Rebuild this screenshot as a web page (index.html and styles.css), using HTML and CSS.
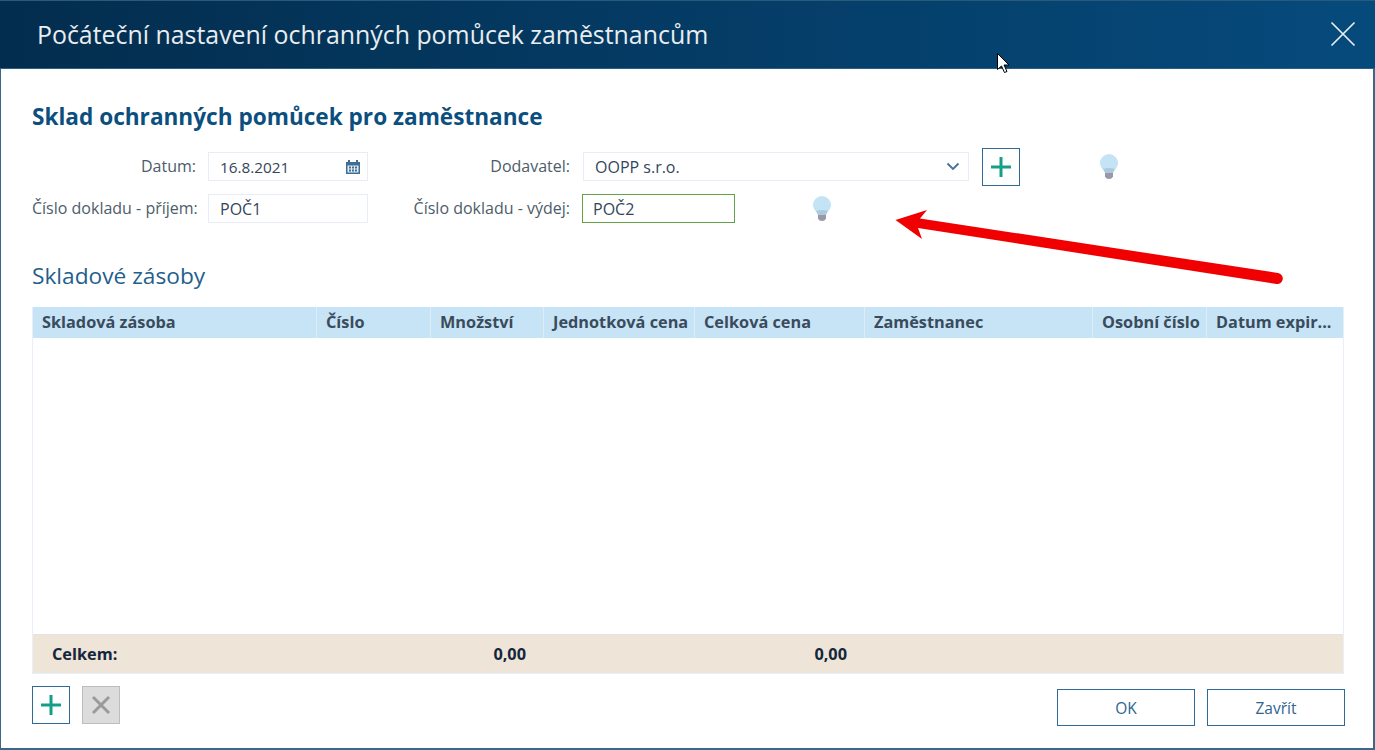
FILE: index.html
```html
<!DOCTYPE html>
<html lang="cs">
<head>
<meta charset="utf-8">
<title>Počáteční nastavení ochranných pomůcek zaměstnancům</title>
<link rel="stylesheet" href="styles.css">
</head>
<body>
<div class="window">
  <header class="titlebar">
    <h1 class="title">Počáteční nastavení ochranných pomůcek zaměstnancům</h1>
    <svg class="close" width="26" height="26" viewBox="0 0 26 26"><path d="M1.500 1.500 24.500 24.500M24.500 1.500 1.500 24.500" stroke="#e8eef3" stroke-width="1.700" fill="none"/></svg>
  </header>
  <main class="content">
    <h2 class="heading">Sklad ochranných pomůcek pro zaměstnance</h2>
    <div class="form">
      <div class="form-row">
        <label class="label label-a">Datum:</label>
        <div class="field field-a field-date"><span>16.8.2021</span>
          <svg width="16" height="16" viewBox="0 0 16 16"><path d="M1 3h14v12H1z" fill="#3f6d94"/><path d="M4 1v3M12 1v3" stroke="#3f6d94" stroke-width="2"/><path d="M2.500 6.500h11v7h-11z" fill="#e4edf4"/><path d="M4 7.500h2v2H4zM7 7.500h2v2H7zM10 7.500h2v2h-2zM4 10.500h2v2H4zM7 10.500h2v2H7zM10 10.500h2v2h-2z" fill="#3f6d94"/></svg>
        </div>
        <label class="label label-b">Dodavatel:</label>
        <div class="field field-select"><span>OOPP s.r.o.</span>
          <svg width="14" height="9" viewBox="0 0 14 9"><path d="M1.500 1.500 7 7l5.500-5.500" stroke="#45709b" stroke-width="1.800" fill="none"/></svg>
        </div>
        <button class="icon-btn add-top" type="button"><svg width="22" height="22" viewBox="0 0 22 22"><path d="M11 1v20M1 11h20" stroke="#14a088" stroke-width="3"/></svg></button>
        <svg class="bulb bulb-a" width="20" height="26" viewBox="0 0 20 26"><circle cx="10" cy="9" r="9" fill="#c4e3f4"/><path d="M5 14h10l-1.500 5h-7z" fill="#c4e3f4"/><path d="M4 15q6 -2 12 0l-2 4H6z" fill="#a9cbdd"/><path d="M6 19h8v3.500q-1 2.500-4 2.500t-4-2.500z" fill="#9a98a6"/></svg>
      </div>
      <div class="form-row row-two">
        <label class="label label-a">Číslo dokladu - příjem:</label>
        <div class="field field-a"><span>POČ1</span></div>
        <label class="label label-c">Číslo dokladu - výdej:</label>
        <div class="field field-active"><span>POČ2</span></div>
        <svg class="bulb bulb-b" width="20" height="26" viewBox="0 0 20 26"><circle cx="10" cy="9" r="9" fill="#c4e3f4"/><path d="M5 14h10l-1.500 5h-7z" fill="#c4e3f4"/><path d="M4 15q6 -2 12 0l-2 4H6z" fill="#a9cbdd"/><path d="M6 19h8v3.500q-1 2.500-4 2.500t-4-2.500z" fill="#9a98a6"/></svg>
      </div>
    </div>
    <h3 class="subheading">Skladové zásoby</h3>
    <section class="table">
      <div class="grid thead">
        <div class="th">Skladová zásoba</div>
        <div class="th">Číslo</div>
        <div class="th">Množství</div>
        <div class="th">Jednotková cena</div>
        <div class="th">Celková cena</div>
        <div class="th">Zaměstnanec</div>
        <div class="th">Osobní číslo</div>
        <div class="th">Datum expir...</div>
      </div>
      <div class="tbody"></div>
      <div class="grid tfoot">
        <div class="tf tf-label">Celkem:</div>
        <div class="tf"></div>
        <div class="tf tf-num">0,00</div>
        <div class="tf"></div>
        <div class="tf tf-num">0,00</div>
        <div class="tf"></div>
        <div class="tf"></div>
        <div class="tf"></div>
      </div>
    </section>
    <footer class="actions">
      <div class="actions-left">
        <button class="icon-btn" type="button"><svg width="22" height="22" viewBox="0 0 22 22"><path d="M11 1v20M1 11h20" stroke="#14a088" stroke-width="3"/></svg></button>
        <button class="icon-btn disabled" type="button"><svg width="20" height="20" viewBox="0 0 20 20"><path d="M2 2l16 16M18 2 2 18" stroke="#9a9a9a" stroke-width="3"/></svg></button>
      </div>
      <div class="actions-right">
        <button class="btn" type="button">OK</button>
        <button class="btn" type="button">Zavřít</button>
      </div>
    </footer>
  </main>
  <svg class="annotation" width="1375" height="750" viewBox="0 0 1375 750">
    <path d="M895.500 220 927 210 920 218.500 1278 273a5.500 5.500 0 0 1-1.500 11L918 228 922 239z" fill="#f00000"/>
    <path d="M997.500 53.500v16l4-3.500 3 6.500 2.500-1-3-6.500h5z" fill="#fff" stroke="#000" stroke-width="1"/>
  </svg>
</div>
</body>
</html>
```
FILE: styles.css
```css
* { box-sizing: border-box; }
html, body { margin: 0; padding: 0; height: 100%; background: #fff; }
body { font-family: "Open Sans", "Noto Sans", sans-serif; overflow: hidden; }
.window {
  position: relative;
  width: 1375px;
  height: 750px;
  display: flex;
  flex-direction: column;
  border-bottom: 2px solid #3d6885;
}
.titlebar {
  height: 69px;
  flex: none;
  display: flex;
  align-items: center;
  justify-content: space-between;
  padding: 0 19px 2px 37px;
  background: linear-gradient(90deg, #032d4e 0%, #064a7c 100%);
  border-top: 1px solid #285a7c;
  border-bottom: 1px solid #2a6088;
}
.title { margin: 0; font-size: 24.9px; font-weight: 400; color: #e9edf0; white-space: nowrap; }
.close { display: block; margin-top: 1px; }
.content {
  flex: 1;
  display: flex;
  flex-direction: column;
  min-height: 0;
  padding: 0 29px 0 31px;
  border-left: 1px solid #3d6885;
  border-right: 2px solid #3d6885;
}
.heading { margin: 33px 0 0; height: 30px; font-size: 22.600px; line-height: 30px; font-weight: 700; color: #0b4f7f; white-space: nowrap; }
.form { margin-top: 20px; display: flex; flex-direction: column; gap: 13px; }
.form-row { display: flex; align-items: center; height: 29px; position: relative; }
.label { font-size: 16px; color: #4d5c6b; text-align: right; white-space: nowrap; margin-top: -1px; }
.label-a { width: 164px; }
.label-b { width: 202px; }
.label-c { width: 202px; }
.field {
  height: 29px;
  display: flex;
  align-items: center;
  justify-content: space-between;
  margin-left: 12px;
  padding: 0 6px 0 11px;
  font-size: 16px;
  color: #34465a;
  background: #fff;
  border: 1px solid #e6edf7;
}
.field-a { width: 160px; }
.field-date { font-size: 15.300px; }
.field-select { width: 386px; margin-left: 13px; padding-right: 8px; }
.field-active { width: 153px; border-color: #62a245; padding-left: 10px; }
.icon-btn {
  width: 38px;
  height: 38px;
  padding: 0;
  display: flex;
  align-items: center;
  justify-content: center;
  background: #fff;
  border: 1px solid #2e6a98;
}
.add-top { margin-left: 13px; flex: none; }
.disabled { background: #dcdcdc; border: 1px solid #bdbdbd; }
.bulb { position: absolute; top: 2px; }
.bulb-a { left: 1067px; }
.bulb-b { left: 780px; }
.subheading { margin: 38px 0 0; height: 30px; font-size: 22.700px; line-height: 30px; font-weight: 400; color: #1f5f8d; white-space: nowrap; }
.table { margin-top: 16px; display: flex; flex-direction: column; height: 367px; flex: none; border: 1px solid #e9eff8; border-top: 0; }
.grid { display: grid; grid-template-columns: 284px 114px 113px 151px 170px 228px 114px 1fr; }
.thead { height: 31px; background: #c6e4f6; }
.th { padding-left: 9px; font-size: 16.300px; line-height: 30px; font-weight: 700; color: #3a4b5c; white-space: nowrap; overflow: hidden; border-right: 1px solid #dcedf8; }
.th:last-child { border-right: 0; }
.tbody { flex: 1; }
.tfoot { height: 39px; background: #eee4d7; border-top: 1px solid #e3e3e6; }
.tf { font-size: 16.300px; font-weight: 700; line-height: 38px; color: #14263c; }
.tf-label { padding-left: 19px; }
.tf-num { text-align: right; padding-right: 18px; }
.actions { display: flex; justify-content: space-between; margin-top: 12px; margin-right: -1px; }
.actions-left { display: flex; gap: 12px; }
.actions-right { display: flex; gap: 12px; margin-top: 3px; }
.btn {
  width: 138px;
  height: 37px;
  font-family: inherit;
  font-size: 15.500px;
  color: #2e648f;
  background: #fff;
  border: 1px solid #2e6a98;
}
.annotation { position: absolute; inset: 0; pointer-events: none; }
```
